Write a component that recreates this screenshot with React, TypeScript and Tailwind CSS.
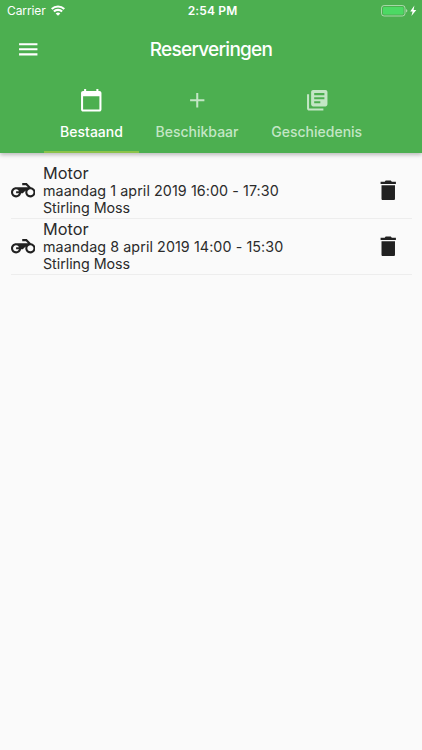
import type { ReactNode } from 'react';

const icons = {
  menu: 'M3 18h18v-2H3v2zm0-5h18v-2H3v2zm0-7v2h18V6H3z',
  calendar:
    'M20 3h-1V1h-2v2H7V1H5v2H4c-1.1 0-2 .9-2 2v16c0 1.1.9 2 2 2h16c1.1 0 2-.9 2-2V5c0-1.1-.9-2-2-2zm0 18H4V8h16v13z',
  add: 'M19 13h-6v6h-2v-6H5v-2h6V5h2v6h6v2z',
  library:
    'M4 6H2v14c0 1.1.9 2 2 2h14v-2H4V6zm16-4H8c-1.1 0-2 .9-2 2v12c0 1.1.9 2 2 2h12c1.1 0 2-.9 2-2V4c0-1.1-.9-2-2-2zm-1 9H9V9h10v2zm-4 4H9v-2h6v2zm4-8H9V5h10v2z',
  motorcycle:
    'M19.44 9.03L15.41 5H11v2h3.59l2 2H5c-2.8 0-5 2.2-5 5s2.2 5 5 5c2.46 0 4.45-1.69 4.9-4h1.65l2.77-2.77c-.21.54-.32 1.14-.32 1.77 0 2.8 2.2 5 5 5s5-2.2 5-5c0-2.65-1.97-4.77-4.56-4.97zM7.82 15C7.4 16.15 6.28 17 5 17c-1.63 0-3-1.37-3-3s1.37-3 3-3c1.28 0 2.4.85 2.82 2H5v2h2.82zM19 17c-1.66 0-3-1.34-3-3s1.34-3 3-3 3 1.34 3 3-1.34 3-3 3z',
  trash:
    'M5.4 7.1h13.2v13.2c0 .7-.5 1.2-1.2 1.2H6.6c-.7 0-1.2-.5-1.2-1.2V7.1zM19.5 3.6h-4l-1-1.1h-5l-1 1.1h-4v2.2h15V3.6z',
};

function Icon({ name }: { name: keyof typeof icons }) {
  return (
    <svg viewBox="0 0 24 24" className="size-[24.5px] shrink-0" fill="currentColor">
      <path d={icons[name]} />
    </svg>
  );
}

function StatusBar() {
  return (
    <div className="grid h-[22px] grid-cols-3 items-center pr-[5px] pl-[7px] text-[12px] leading-none">
      <div className="flex items-center gap-[5px]">
        <span className="tracking-[-0.1px]">Carrier</span>
        <svg viewBox="0 0 14 11" className="mb-[1px] h-[11px] w-[14px]" fill="none" stroke="currentColor" strokeWidth="2.1">
          <path d="M0.7 4a9 9 0 0 1 12.6 0" />
          <path d="M2.9 6.6a5.8 5.8 0 0 1 8.2 0" />
          <path d="M7 10.8 4.7 8.5a3.3 3.3 0 0 1 4.6 0z" fill="currentColor" stroke="none" />
        </svg>
      </div>
      <span className="pl-[1px] text-center font-semibold tracking-[0.15px]">2:54 PM</span>
      <div className="flex items-center justify-end">
        <svg viewBox="0 0 36 12" className="h-[12px] w-[36px]">
          <rect x="0.5" y="0.5" width="23.5" height="10.5" rx="2.6" fill="none" stroke="#fff" strokeOpacity=".5" />
          <rect x="2" y="2" width="20.5" height="7.5" rx="1.3" fill="#4cd964" />
          <path d="M25 4v3.6q1.4-.5 1.4-1.8T25 4z" fill="#fff" fillOpacity=".5" />
          <path d="M33.4.6 29.2 6.4h2.4L30.4 11l4.9-6.1h-2.7z" fill="#fff" />
        </svg>
      </div>
    </div>
  );
}

function Tab({ children, icon, active, width }: { children: ReactNode; icon: keyof typeof icons; active?: boolean; width: string }) {
  return (
    <div
      className={`flex h-[77px] flex-col items-center border-b-2 pt-[12.2px] ${width} ${
        active ? 'border-[#8bc34a] text-white' : 'border-transparent text-[#c3e6c5]'
      }`}
    >
      <Icon name={icon} />
      <span className="mt-[10px] text-[14px] leading-[18px] font-medium whitespace-nowrap">{children}</span>
    </div>
  );
}

function Reservation({ date }: { date: string }) {
  return (
    <div className="mr-[10px] ml-[10.5px] flex h-[56px] items-center border-b border-[#ededed]">
      <Icon name="motorcycle" />
      <div className="ml-[8px] flex-1 pb-[1px] text-[14.3px] leading-[17px] text-[#2b2b2b]">
        <div className="text-[16.3px] leading-[18px]">Motor</div>
        <div className="tracking-[0.08px]">{date}</div>
        <div className="tracking-[-0.05px]">Stirling Moss</div>
      </div>
      <div className="mr-[11.5px] flex">
        <Icon name="trash" />
      </div>
    </div>
  );
}

export default function App() {
  return (
    <div className="h-[750px] w-full overflow-hidden bg-[#fafafa] font-['Inter',sans-serif] text-[#212121]">
      <header className="h-[153px] bg-[#4caf50] text-white shadow-[0_2px_4px_rgba(0,0,0,0.25)]">
        <StatusBar />
        <div className="grid h-[54px] grid-cols-[60px_1fr_60px] items-center">
          <div className="flex pl-[16.2px]">
            <Icon name="menu" />
          </div>
          <h1 className="pt-[2px] text-center text-[19px] font-medium tracking-[-0.75px]">Reserveringen</h1>
        </div>
        <nav className="flex justify-center pl-[0.5px]">
          <Tab icon="calendar" width="w-[95.5px]" active>Bestaand</Tab>
          <Tab icon="add" width="w-[115.5px]">Beschikbaar</Tab>
          <Tab icon="library" width="w-[124px]">Geschiedenis</Tab>
        </nav>
      </header>
      <main className="pt-[10px]">
        <Reservation date="maandag 1 april 2019 16:00 - 17:30" />
        <Reservation date="maandag 8 april 2019 14:00 - 15:30" />
      </main>
    </div>
  );
}
